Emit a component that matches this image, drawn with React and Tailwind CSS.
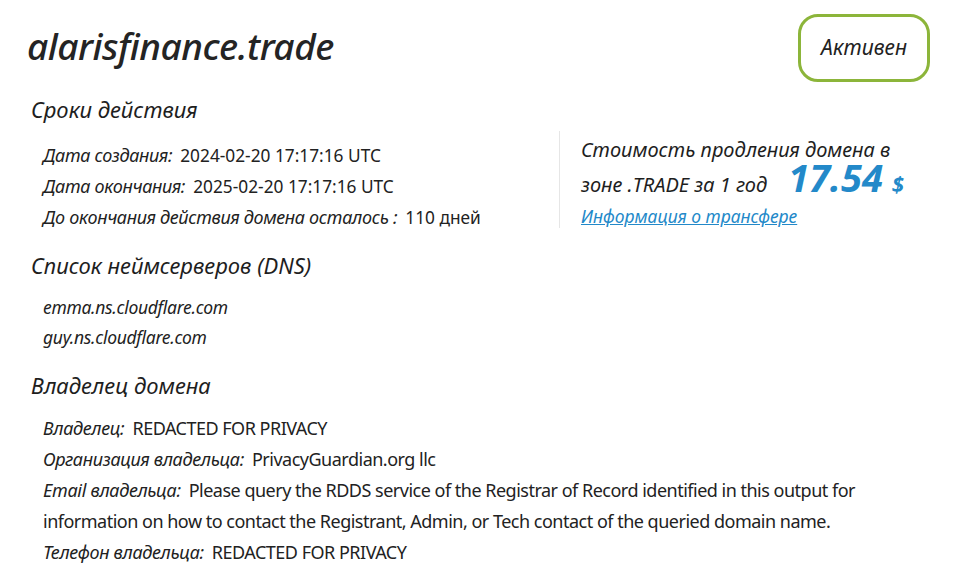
const FONT = { fontFamily: '"Noto Sans", "Open Sans", sans-serif' };

const terms = [
    { label: 'Дата создания:', value: '2024-02-20 17:17:16 UTC' },
    { label: 'Дата окончания:', value: '2025-02-20 17:17:16 UTC' },
    { label: 'До окончания действия домена осталось :', value: '110 дней' },
];

const dns = ['emma.ns.cloudflare.com', 'guy.ns.cloudflare.com'];

function Row({ label, children, upper }) {
    return (
        <p className="text-[18px] leading-[31px] text-[#222]">
            <span className="italic tracking-[-0.3px]">{label}</span>
            <span className={upper ? 'ml-2 text-[17.3px]' : 'ml-2 tracking-[-0.5px]'}>{children}</span>
        </p>
    );
}

function Heading({ children }) {
    return <h2 className="text-[22px] italic leading-[30px] text-[#1e1e1e]">{children}</h2>;
}

export default function App() {
    return (
        <div className="min-h-[587px] w-[962px] bg-white pl-[27px] pr-[32px] text-[#222]" style={FONT}>
            <div className="flex items-start justify-between pt-[14px]">
                <h1 className="mt-[8px] text-[37px] font-medium italic leading-[48px] tracking-[-0.5px] text-[#242424]">
                    alarisfinance.trade
                </h1>
                <span className="flex h-[68px] w-[132px] items-center justify-center rounded-[20px] border-[3px] border-[#8cb53a] text-[21px] italic text-[#222]">
                    Активен
                </span>
            </div>

            <div className="mt-[12px] pl-[4px]">
                <Heading>Сроки действия</Heading>
            </div>

            <div className="mt-[16px] flex">
                <div className="w-[532px] pl-[16px] pr-[10px]">
                    {terms.map((t) => (
                        <Row key={t.label} label={t.label} upper>
                            {t.value}
                        </Row>
                    ))}
                </div>
                <div className="-mt-[9px] h-[97px] border-l border-[#e6e6e6] pl-[21px]">
                    <p className="mt-[6px] text-[20px] italic leading-[26px] text-[#1e1e1e]">
                        Стоимость продления домена в
                    </p>
                    <p className="-mt-[4px] flex items-baseline text-[20px] italic leading-[36px] text-[#1e1e1e]">
                        зоне .TRADE за 1 год
                        <span className="ml-[21px] text-[38px] font-bold text-[#2389c9]">17.54</span>
                        <span className="ml-[9px] text-[22px] font-bold text-[#2389c9]">$</span>
                    </p>
                    <a
                        href="#"
                        className="-mt-[1px] block text-[17.5px] italic leading-[28px] text-[#2389c9] underline"
                    >
                        Информация о трансфере
                    </a>
                </div>
            </div>

            <div className="mt-[17px] pl-[4px]">
                <Heading>Список неймсерверов (DNS)</Heading>
            </div>
            <div className="mt-[12px] pl-[16px]">
                {dns.map((d) => (
                    <p key={d} className="text-[17.5px] italic leading-[30px] tracking-[-0.3px] text-[#222]">
                        {d}
                    </p>
                ))}
            </div>

            <div className="mt-[18px] pl-[4px]">
                <Heading>Владелец домена</Heading>
            </div>
            <div className="mt-[13px] pl-[16px] pr-[50px]">
                <Row label="Владелец:">REDACTED FOR PRIVACY</Row>
                <Row label="Организация владельца:">PrivacyGuardian.org llc</Row>
                <Row label="Email владельца:">
                    Please query the RDDS service of the Registrar of Record identified in this output for
                    information on how to contact the Registrant, Admin, or Tech contact of the queried domain
                    name.
                </Row>
                <Row label="Телефон владельца:">REDACTED FOR PRIVACY</Row>
            </div>
        </div>
    );
}
